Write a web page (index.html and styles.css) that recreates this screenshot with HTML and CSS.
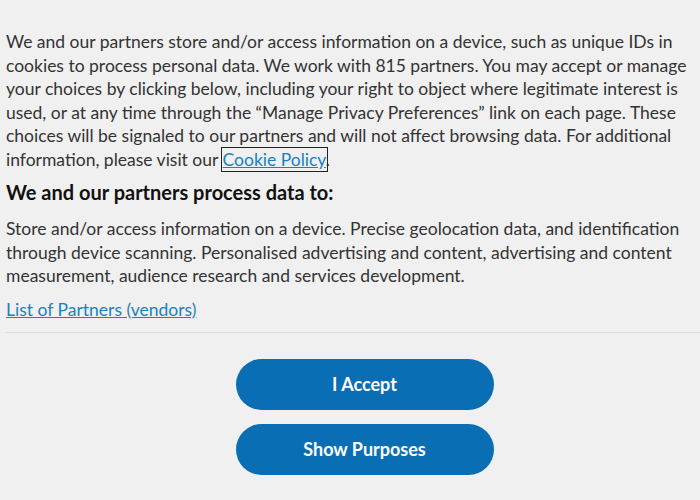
FILE: index.html
```html
<!doctype html>
<html lang="en">
<head>
<meta charset="utf-8">
<title>Privacy Preferences</title>
<meta name="viewport" content="width=device-width, initial-scale=1">
<link rel="stylesheet" href="styles.css">
</head>
<body>

<div class="notice">
  <p class="intro">We and our partners store and/or access information on a device, such as unique IDs in cookies to process personal data. We work with 815 partners. You may accept or manage your choices by clicking below, including your right to object where legitimate interest is used, or at any time through the “Manage Privacy Preferences” link on each page. These choices will be signaled to our partners and will not affect browsing data. For additional information, please visit our <a href="#" class="focused">Cookie Policy</a>.</p>

  <h2>We and our partners process data to:</h2>
  <p class="purposes">Store and/or access information on a device. Precise geolocation data, and identification through device scanning. Personalised advertising and content, advertising and content measurement, audience research and services development.</p>

  <a href="#" class="vendors">List of Partners (vendors)</a>
</div>

<div class="actions">
  <button type="button">I Accept</button>
  <button type="button">Show Purposes</button>
</div>

</body>
</html>
```

FILE: styles.css
```css
body {
  margin: 0;
  background: #f0f0f0;
  color: #333;
  font: 17.5px/23.6px Lato, "Open Sans", sans-serif;
}
.notice {
  padding: 30px 6px 0 0;
  border-bottom: 1px solid #dcdcdc;
  margin-left: 6px;
}
.intro {
  margin: 0;
}
a {
  color: #1a80c0;
}
.focused {
  outline: 1px solid #222;
  outline-offset: 1px;
}
h2 {
  margin: 9px 0 0;
  font-size: 20px;
  font-weight: bold;
  color: #111;
}
.purposes {
  margin: 13px 0 0;
}
.vendors {
  display: inline-block;
  margin: 10px 0 10px;
}
.actions {
  display: flex;
  flex-direction: column;
  align-items: center;
  gap: 14px;
  padding: 26px 0 0 29px;
}
.actions button {
  width: 258px;
  height: 51px;
  border: none;
  border-radius: 26px;
  background: #0a6eb4;
  color: #fff;
  font: bold 18px Lato, sans-serif;
  cursor: pointer;
}
```
